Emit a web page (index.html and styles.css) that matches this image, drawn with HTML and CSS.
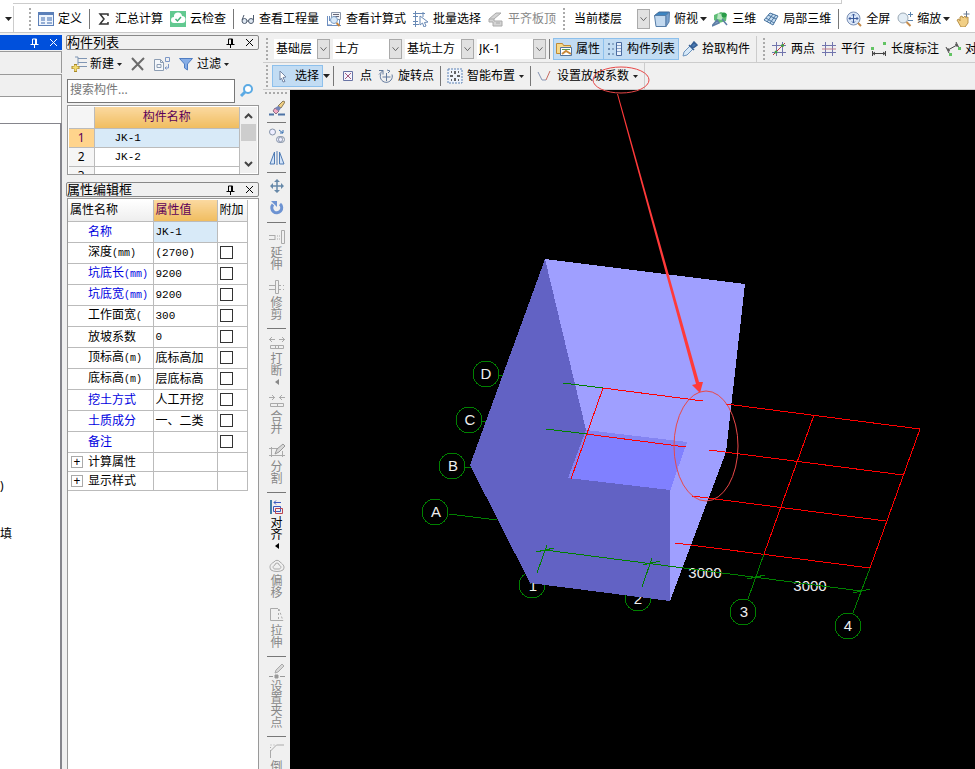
FILE: index.html
```html
<!DOCTYPE html>
<html lang="zh-CN">
<head>
    <meta charset="UTF-8">
    <meta name="viewport" content="width=device-width, initial-scale=1.0">
    <title>构件列表</title>
    <link rel="stylesheet" href="styles.css">
</head>
<body>

    <!-- Shared icons -->
    <svg class="sprite" aria-hidden="true">
        <symbol id="chevron" viewBox="0 0 13 20"><path d="M3 8l3.500 4L10 8" fill="none" stroke="#555"/></symbol>
        <symbol id="drop" viewBox="0 0 7 4"><path d="M0 0h7L3.500 4z" fill="#222"/></symbol>
        <symbol id="side" viewBox="0 0 4 6"><path d="M4 0v6L0 3z" fill="currentColor"/></symbol>
        <symbol id="pin" viewBox="0 0 9 10"><path d="M2.500 1h4v5M2.500 1v5M5.500 1v5M0.500 6.500h8M4.500 6.500V10" fill="none" stroke="currentColor"/></symbol>
        <symbol id="close" viewBox="0 0 9 9"><path d="M1 1l7 7M8 1L1 8" fill="none" stroke="currentColor"/></symbol>
    </svg>

    <!-- Main toolbar -->
    <header class="topbar">
        <div class="menu-edge"></div>
        <div class="tools">
            <button class="stub" aria-label="更多"><svg class="drop"><use href="#drop"/></svg></button>
            <i class="grip"></i>
            <button class="tool"><svg class="icon" viewBox="0 0 16 16"><rect x=".5" y="1.500" width="15" height="13" fill="#eef4fc" stroke="#5b7fb8"/><path d="M1 3h14" stroke="#5b7fb8" stroke-width="2"/><path d="M3 7h4M3 9h4M3 12h4M9 7h5M9 9h5M9 12h5" stroke="#3d68ad"/></svg>定义</button>
            <i class="sep"></i>
            <button class="tool"><svg class="icon narrow" viewBox="0 0 14 16"><path d="M11 5V3H3l4 5-4 5h8v-2" fill="none" stroke="#333" stroke-width="1.500"/></svg>汇总计算</button>
            <button class="tool"><svg class="icon" viewBox="0 0 16 16"><rect width="16" height="16" fill="#62c990"/><path d="M4 12a3 3 0 0 1 0-6 4 4 0 0 1 8-1 3.500 3.500 0 0 1 0 7z" fill="#fff"/><path d="M5.500 8l2 2 3.500-4" fill="none" stroke="#45b078" stroke-width="1.500"/></svg>云检查</button>
            <i class="sep"></i>
            <button class="tool"><svg class="icon narrow" viewBox="0 0 14 16"><circle cx="3.500" cy="10" r="2.500" fill="#dfe8f2" stroke="#4e5b6e"/><circle cx="10" cy="10" r="2.500" fill="#dfe8f2" stroke="#4e5b6e"/><path d="M1 9l2-5M12.500 9V4M6 10h1.500" stroke="#4e5b6e" fill="none"/></svg>查看工程量</button>
            <button class="tool"><svg class="icon" viewBox="0 0 16 16"><path d="M1.500 5v9H6M3.500 5v5M1 14.500h14M13.500 8v6" fill="none" stroke="#6d8fc0"/><path d="M5.500 1.500h9v7h-9z" fill="#f3f5f8" stroke="#8b97aa"/><path d="M7 3.500h6M7 5.500h6" stroke="#667"/><circle cx="8" cy="9" r="3.500" fill="#d7e8f8" stroke="#7d9fc7"/><path d="M10.500 12l3 3" stroke="#c6843c" stroke-width="2"/></svg>查看计算式</button>
            <button class="tool"><svg class="icon" viewBox="0 0 16 16"><path d="M0 2.500h12M0 5.500h5M0 13.500h6M2.500 0v16M10 1v5M0 10.500h5" stroke="#6889b5" fill="none"/><path d="M7 5l8 6-3.500.500L13 15l-2 1-1.500-4L7 14z" fill="#fff" stroke="#6889b5"/></svg>批量选择</button>
            <button class="tool" disabled><svg class="icon" viewBox="0 0 16 16"><path d="M1 8l7-6h5l-7 6zM6 8v2h8v5H5v-4H1V8M8 12h4" fill="#d4d4d4" stroke="#aaa"/></svg>平齐板顶</button>
            <i class="grip"></i>
            <span class="combo floor"><select aria-label="楼层"><option>当前楼层</option></select><svg class="chevron"><use href="#chevron"/></svg></span>
            <button class="tool"><svg class="icon" viewBox="0 0 16 16"><path d="M.500 4.500L5 1h10.500l-3.500 3.500z" fill="#3c85c2" stroke="#426b98"/><path d="M.500 4.500H12v11H2z" fill="#c3d9ef" stroke="#567da8"/><path d="M12 4.500L15.500 1 15 11l-3 4.500z" fill="#7ba3cf" stroke="#567da8"/></svg>俯视<svg class="drop"><use href="#drop"/></svg></button>
            <button class="tool"><svg class="icon" viewBox="0 0 16 16"><path d="M2 4l7-3 6 2-1 7-7 2-5-3z" fill="#5fbd76"/><path d="M6 2l5 2-1 5-5-1z" fill="#b9e6c1"/><circle cx="12" cy="4" r="2.500" fill="#2a9c49"/><path d="M0 15l5-6 2 3zM10 8l5 6" fill="#85a2c5" stroke="#5f7fa6" stroke-width="1.500"/></svg>三维</button>
            <button class="tool"><svg class="icon" viewBox="0 0 16 16"><path d="M1 9l6-7 8 3-5 9z" fill="#c5dcf1" stroke="#49749f"/><path d="M3 7l8 5M5 4l8 4M10 3l-6 8M13 4l-6 8" stroke="#49749f" fill="none"/></svg>局部三维</button>
            <i class="sep"></i>
            <button class="tool"><svg class="icon" viewBox="0 0 16 16"><circle cx="7.500" cy="7.500" r="6.500" fill="#dbe7f8" stroke="#7a8fb4"/><path d="M7.500 3v9M3 7.500h9M6 4.500L7.500 3 9 4.500M6 10.500L7.500 12 9 10.500M4.500 6L3 7.500 4.500 9M10.500 6L12 7.500 10.500 9" fill="none" stroke="#3c5b9b"/><path d="M12 12l3 3" stroke="#c58b4c" stroke-width="2"/></svg>全屏</button>
            <button class="tool"><svg class="icon" viewBox="0 0 16 16"><circle cx="6" cy="7" r="5" fill="#e3edf5" stroke="#9ba9b5"/><path d="M9.500 11l4 4" stroke="#c58b4c" stroke-width="2"/><path d="M13.500 1v5M11 3.500h5M11 9.500h5" stroke="#5b84ae"/></svg>缩放<svg class="drop"><use href="#drop"/></svg></button>
            <button class="tool"><svg class="icon" viewBox="0 0 16 16"><path d="M2 9l2-1 1 2V6l2-1 1 2 2-2 1 2 2-1v6l-3 4H6z" fill="#f1cf86" stroke="#b9924a"/><path d="M11.500 0v6M8.500 3h6" stroke="#667891"/></svg>平移</button>
        </div>
    </header>

    <main class="workspace">

        <!-- Left dock, mostly collapsed -->
        <aside class="dock-left">
            <div class="dock-title active">
                <button aria-label="固定"><svg class="pin"><use href="#pin"/></svg></button>
                <button aria-label="关闭"><svg class="close"><use href="#close"/></svg></button>
            </div>
            <div class="strip"></div>
            <div class="strip"></div>
            <div class="blank"></div>
            <div class="tree">
                <p>)</p>
                <p>填</p>
            </div>
        </aside>

        <aside class="dock-mid">
            <section class="panel">
                <div class="dock-title">
                    <h2>构件列表</h2>
                    <button aria-label="固定"><svg class="pin"><use href="#pin"/></svg></button>
                    <button aria-label="关闭"><svg class="close"><use href="#close"/></svg></button>
                </div>
                <div class="panel-tools">
                    <button class="tool"><svg class="icon" viewBox="0 0 16 16"><path d="M7 2.500h9M7 6.500h9M7 10.500h9M4 1h3v8" fill="none" stroke="#7f95b3"/><path d="M4.500 8v8M.500 11.500h8" stroke="#a8892a" stroke-width="3"/><path d="M4.500 9v6M1.500 11.500h6" stroke="#f3dc72" stroke-width="2"/></svg>新建<svg class="drop small"><use href="#drop"/></svg></button>
                    <button class="tool" aria-label="删除"><svg class="icon" viewBox="0 0 16 16"><path d="M2 2l11 12M14 2L2 14" stroke="#6b6b6b" stroke-width="2" fill="none"/></svg></button>
                    <button class="tool" aria-label="复制"><svg class="icon" viewBox="0 0 16 16"><path d="M.500 3.500h6l3 3v8h-9zM6.500 3.500v3h3M3 8.500h4v3H3z" fill="#f4f7fb" stroke="#8c9db3"/><path d="M11.500 1.500h4v4h-4zM14.500 8v4H11M12.500 10.500L11 12l1.500 1.500" fill="none" stroke="#7c97c6"/></svg></button>
                    <button class="tool"><svg class="icon" viewBox="0 0 16 16"><path d="M1.500 2.500h13L9.500 8v6l-3-2V8z" fill="#87aee6" stroke="#4f7dc2"/></svg>过滤<svg class="drop small"><use href="#drop"/></svg></button>
                </div>
                <div class="search">
                    <input type="text" placeholder="搜索构件..." aria-label="搜索构件">
                    <button aria-label="搜索"><svg class="icon" viewBox="0 0 16 16"><circle cx="9" cy="6" r="4" fill="#fff" stroke="#5baae4" stroke-width="2"/><path d="M6 9l-4 4" stroke="#5baae4" stroke-width="3"/></svg></button>
                </div>
                <div class="list">
                    <table class="grid components">
                        <tr><th class="no"></th><th class="hot">构件名称</th></tr>
                        <tr class="selected"><td class="no">1</td><td class="mono">JK-1</td></tr>
                        <tr><td class="no">2</td><td class="mono">JK-2</td></tr>
                        <tr><td class="no">3</td><td></td></tr>
                    </table>
                    <div class="scrollbar">
                        <svg class="arrow" viewBox="0 0 9 6"><path d="M1 5l3.500-3.500L8 5" fill="none" stroke="#444" stroke-width="2"/></svg>
                        <i class="thumb"></i>
                        <svg class="arrow" viewBox="0 0 9 6"><path d="M1 1l3.500 3.500L8 1" fill="none" stroke="#444" stroke-width="2"/></svg>
                    </div>
                </div>
            </section>

            <section class="panel grow">
                <div class="dock-title">
                    <h2>属性编辑框</h2>
                    <button aria-label="固定"><svg class="pin"><use href="#pin"/></svg></button>
                    <button aria-label="关闭"><svg class="close"><use href="#close"/></svg></button>
                </div>
                <div class="props-wrap">
                    <table class="grid props">
                        <tr><th>属性名称</th><th class="hot">属性值</th><th>附加</th></tr>
                        <tr><td class="blue">名称</td><td class="current"><span class="mono">JK-1</span></td><td></td></tr>
                        <tr><td>深度<span class="unit">(mm)</span></td><td><span class="mono">(2700)</span></td><td><input type="checkbox" aria-label="深度"></td></tr>
                        <tr><td class="blue">坑底长<span class="unit">(mm)</span></td><td><span class="mono">9200</span></td><td><input type="checkbox" aria-label="坑底长"></td></tr>
                        <tr><td class="blue">坑底宽<span class="unit">(mm)</span></td><td><span class="mono">9200</span></td><td><input type="checkbox" aria-label="坑底宽"></td></tr>
                        <tr><td>工作面宽<span class="unit">(</span></td><td><span class="mono">300</span></td><td><input type="checkbox" aria-label="工作面宽"></td></tr>
                        <tr><td>放坡系数</td><td><span class="mono">0</span></td><td><input type="checkbox" aria-label="放坡系数"></td></tr>
                        <tr><td>顶标高<span class="unit">(m)</span></td><td>底标高加</td><td><input type="checkbox" aria-label="顶标高"></td></tr>
                        <tr><td>底标高<span class="unit">(m)</span></td><td>层底标高</td><td><input type="checkbox" aria-label="底标高"></td></tr>
                        <tr><td class="blue">挖土方式</td><td>人工开挖</td><td><input type="checkbox" aria-label="挖土方式"></td></tr>
                        <tr><td class="blue">土质成分</td><td>一、二类</td><td><input type="checkbox" aria-label="土质成分"></td></tr>
                        <tr><td class="blue">备注</td><td></td><td><input type="checkbox" aria-label="备注"></td></tr>
                        <tr class="group"><td><button class="expand">+</button>计算属性</td><td></td><td></td></tr>
                        <tr class="group"><td><button class="expand">+</button>显示样式</td><td></td><td></td></tr>
                    </table>
                </div>
            </section>
        </aside>

        <div class="editor">
            <div class="bar">
                <i class="grip"></i>
                <span class="combo w-s"><select aria-label="楼层选择"><option>基础层</option></select><svg class="chevron"><use href="#chevron"/></svg></span>
                <span class="combo w-m"><select aria-label="构件大类"><option>土方</option></select><svg class="chevron"><use href="#chevron"/></svg></span>
                <span class="combo w-m"><select aria-label="构件类型"><option>基坑土方</option></select><svg class="chevron"><use href="#chevron"/></svg></span>
                <span class="combo w-m"><select aria-label="构件"><option>JK-1</option></select><svg class="chevron"><use href="#chevron"/></svg></span>
                <i class="sep"></i>
                <div class="toggles">
                    <button class="tool on"><svg class="icon" viewBox="0 0 16 16"><path d="M.500 2.500h6l1 2h7v8H.500z" fill="#f6d98b" stroke="#c08a34"/><path d="M4.500 6.500h11v8h-11z" fill="#fff" stroke="#52749f"/><path d="M6 13l4-3 5 3" stroke="#c8873a" fill="none" stroke-width="2"/><path d="M6 8.500h8" stroke="#5a9a50"/></svg>属性</button>
                    <button class="tool on"><svg class="icon" viewBox="0 0 16 16"><path d="M1.500 2.500h1v1h-1zM1.500 7.500h1v1h-1zM1.500 12.500h1v1h-1z" fill="none" stroke="#56779e"/><path d="M5 3h2M5 8h2M5 13h2" stroke="#56779e"/><path d="M9.500 1.500h5v13h-5z" fill="#e8f0fb" stroke="#4a6ba0"/><path d="M10 4.500h4M10 7.500h4M10 10.500h4" stroke="#8aa3c8"/></svg>构件列表</button>
                </div>
                <button class="tool pick"><svg class="icon" viewBox="0 0 16 16"><path d="M1 15l1-4 6-6 3 3-6 6z" fill="#d6e8f8" stroke="#6c93bd"/><path d="M7 4l5 5M9 5l3-4 3 3-4 3z" fill="#4a7ab4" stroke="#365f94" stroke-width="1.500"/></svg>拾取构件</button>
                <i class="edge"></i>
                <i class="grip"></i>
                <button class="tool"><svg class="icon" viewBox="0 0 16 16"><path d="M5.500 1v14M11.500 1v14M1 4.500h14M1 11.500h14" stroke="#7174ad"/><path d="M2 14L14 2" stroke="#c03a3a"/><circle cx="5" cy="11" r="1.500" fill="#3fa045"/><circle cx="11.500" cy="4.500" r="1.500" fill="#3fa045"/></svg>两点</button>
                <button class="tool"><svg class="icon" viewBox="0 0 16 16"><path d="M4.500 1v14M11.500 1v14" stroke="#7174ad"/><path d="M1 4.500h14M1 11.500h14" stroke="#7174ad"/><path d="M1 8h14" stroke="#c07a8a"/></svg>平行</button>
                <button class="tool"><svg class="icon" viewBox="0 0 16 16"><path d="M1.500 10v5M14.500 10v5M2 12.500h12M4 11l-2 1.500L4 14M12 11l2 1.500-2 1.500" fill="none" stroke="#444"/><path d="M0 6h3v3H0zM12 1h3v3h-3z" fill="#62c463"/></svg>长度标注</button>
                <button class="tool"><svg class="icon" viewBox="0 0 16 16"><path d="M1 6l3 6M11 1l3 6M3 9l9-5M3 7v2l2 1M10 3l2 1v2" fill="none" stroke="#444"/><path d="M4 12h3v3H4zM13 6h3v3h-3z" fill="#62c463"/></svg>对齐标注</button>
            </div>
            <div class="bar">
                <i class="grip"></i>
                <div class="toggles">
                    <button class="tool on"><svg class="icon" viewBox="0 0 16 16"><path d="M5 3l6 6-3 .500 2 4-2 .500-1.500-4L5 12z" fill="#fff" stroke="#7486a5"/></svg>选择</button>
                    <svg class="drop"><use href="#drop"/></svg>
                </div>
                <i class="sep"></i>
                <button class="tool"><svg class="icon" viewBox="0 0 16 16"><path d="M3.500 3.500h9v9h-9z" fill="#f4f4fc" stroke="#6873a4"/><path d="M5 5l6 6M11 5l-6 6" stroke="#a35a80"/></svg>点</button>
                <button class="tool"><svg class="icon" viewBox="0 0 16 16"><path d="M3 5.500a6 6 0 1 0 11 1M8.500 5v8M4.500 9h8" fill="none" stroke="#62799c"/><path d="M1 2.500h4v4M5 2.500L1 6.500M9 2l3 1-2 2" fill="none" stroke="#62799c"/></svg>旋转点</button>
                <i class="sep"></i>
                <button class="tool"><svg class="icon" viewBox="0 0 16 16"><path d="M1 1h14v14H1z" fill="#edf3fc" stroke="#5e83b5" stroke-dasharray="2 1"/><path d="M8 3v3M8 10v3M3 8h3M10 8h3M4 4h1M11 4h1M4 12h1M11 12h1" stroke="#333" stroke-width="1.500"/></svg>智能布置<svg class="drop small"><use href="#drop"/></svg></button>
                <i class="sep"></i>
                <button class="tool"><svg class="icon" viewBox="0 0 16 16"><path d="M1 4l4 8h4" fill="none" stroke="#8795b3"/><path d="M9 12l4-9" stroke="#c66a5f"/></svg>设置放坡系数<svg class="drop small"><use href="#drop"/></svg></button>
                <i class="edge"></i>
            </div>

            <div class="stage">
                <nav class="side">
                    <i class="grip-h"></i>
                    <button class="vtool" aria-label="删除"><svg class="icon" viewBox="0 0 16 16"><path d="M9 6l5-5 2 1-4 6z" fill="#f0cf82" stroke="#8a7a55"/><path d="M6 8l4 3-3 3-3-3z" fill="#f3a9c3" stroke="#8a6f86"/><path d="M9 6l3 2-2 3-4-3z" fill="#7585b8"/><path d="M0 14.500h5M9 14.500h7" stroke="#4d73a5" stroke-width="2"/></svg></button>
                    <i class="sep-h"></i>
                    <button class="vtool" aria-label="复制"><svg class="icon" viewBox="0 0 16 16"><circle cx="3.500" cy="4" r="3" fill="#eef" stroke="#8593a8"/><circle cx="10.500" cy="11.500" r="3" fill="#eef" stroke="#8593a8"/><circle cx="12.500" cy="11.500" r="3" fill="none" stroke="#8593a8"/><path d="M10 2l4 3M14 2v3h-3" fill="none" stroke="#3971b2"/></svg></button>
                    <button class="vtool" aria-label="镜像"><svg class="icon" viewBox="0 0 16 16"><path d="M5.500 2v12H1zM10.500 2v12H15z" fill="#d4e4f8" stroke="#4f7bb4"/><path d="M8 1v14" stroke="#4f7bb4"/></svg></button>
                    <i class="sep-h"></i>
                    <button class="vtool" aria-label="移动"><svg class="icon" viewBox="0 0 16 16"><path d="M8 3v10M3 8h10" stroke="#6688a8" stroke-width="1.500"/><path d="M8 1l3 3H5zM8 15l3-3H5zM1 8l3-3v6zM15 8l-3-3v6z" fill="#6688a8"/></svg></button>
                    <button class="vtool" aria-label="旋转"><svg class="icon" viewBox="0 0 16 16"><path d="M4 4.500a5 5 0 1 0 7-.500" fill="none" stroke="#6d93d2" stroke-width="3"/><path d="M2 1h6v6z" fill="#6d93d2"/></svg></button>
                    <i class="sep-h"></i>
                    <button class="vtool labelled" disabled><svg class="icon" viewBox="0 0 16 16"><path d="M0 6.500h6M0 10.500h6M6 6v5M12.500 1.500h3v13h-3zM8 7h1M8 10h1M10 7h1M10 10h1" fill="none" stroke="#aaa"/></svg><span>延伸</span></button>
                    <button class="vtool labelled" disabled><svg class="icon" viewBox="0 0 16 16"><path d="M0 6.500h6M0 10.500h6M6.500 1.500h3v13h-3zM10 6.500h2M10 10.500h2M14 6.500h1M14 10.500h1" fill="none" stroke="#aaa"/></svg><span>修剪</span></button>
                    <i class="sep-h"></i>
                    <button class="vtool labelled" disabled><svg class="icon" viewBox="0 0 16 16"><path d="M0 4.500h6M3 2L.500 4.500 3 7M10 4.500h6M13 2l2.500 2.500L13 7M1.500 10.500h13v3h-13zM6.500 10v4M9.500 10v4" fill="none" stroke="#aaa"/></svg><span>打断</span><svg class="side-arrow"><use href="#side"/></svg></button>
                    <button class="vtool labelled" disabled><svg class="icon" viewBox="0 0 16 16"><path d="M0 4.500h6M3 2l2.500 2.500L3 7M10 4.500h6M13 2l-2.500 2.500L13 7M1.500 10.500h13v3h-13zM8.500 10v4" fill="none" stroke="#aaa"/></svg><span>合并</span></button>
                    <button class="vtool labelled" disabled><svg class="icon" viewBox="0 0 16 16"><path d="M0 5.500h9M2.500 4v10M0 12.500h16M13.500 8v6" fill="none" stroke="#aaa"/><path d="M6 11l2-5 6-5 2 2-6 6z" fill="#d8d8d8" stroke="#999"/></svg><span>分割</span></button>
                    <i class="sep-h"></i>
                    <button class="vtool labelled"><svg class="icon" viewBox="0 0 16 16"><path d="M2 1v14" stroke="#427da6" stroke-width="2"/><path d="M5 3.500h7M7 1.500l-2 2 2 2M4.500 7.500h7v5h-7z" fill="none" stroke="#3a5ac0"/><path d="M6.500 9.500h7v5h-7z" fill="none" stroke="#b84450"/></svg><span>对齐</span><svg class="side-arrow"><use href="#side"/></svg></button>
                    <button class="vtool labelled" disabled><svg class="icon" viewBox="0 0 16 16"><path d="M5 5a3.500 3.500 0 0 1 6 0c4 3 5 5 3 8-3 2-9 2-12 0-2-3-1-6 3-8z" fill="none" stroke="#aaa"/><path d="M6 8a2 2 0 0 1 4 0c3 1 2 4 0 4H6c-2 0-3-3 0-4z" fill="none" stroke="#aaa"/></svg><span>偏移</span></button>
                    <button class="vtool labelled" disabled><svg class="icon" viewBox="0 0 16 16"><path d="M9 1.500H1.500v12H14" fill="none" stroke="#aaa"/><path d="M9.500 2v12M10 2l4 12" stroke="#aaa" stroke-dasharray="2 2"/></svg><span>拉伸</span></button>
                    <i class="sep-h"></i>
                    <button class="vtool labelled" disabled><svg class="icon" viewBox="0 0 16 16"><path d="M6 10l1-3 6-6 2 2-6 6z" fill="#d8d8d8" stroke="#aaa"/><path d="M0 13.500h4M11 13.500h5M6 12h3v3H6z" fill="#999" stroke="#999"/></svg><span>设置夹点</span></button>
                    <i class="sep-h"></i>
                    <button class="vtool labelled" disabled><svg class="icon" viewBox="0 0 16 16"><path d="M1.500 15V8l6-6H15" fill="none" stroke="#aaa"/><path d="M1.500 8V2h6" fill="none" stroke="#aaa" stroke-dasharray="1 2"/></svg><span>倒角</span></button>
                </nav>

                <!-- 3D view: pit solid, axis grid, dimensions and markup -->
                <div class="view">
                    <svg class="scene">
                        <g transform="translate(-290 -90)">
                            <g class="axis">
                                <circle cx="486" cy="374" r="13"/>
                                <circle cx="469" cy="420" r="13"/>
                                <circle cx="452" cy="466" r="13"/>
                                <circle cx="435" cy="512" r="13"/>
                                <circle cx="532" cy="585" r="13"/>
                                <circle cx="638" cy="598" r="13"/>
                                <circle cx="743" cy="612" r="13"/>
                                <circle cx="848" cy="626" r="13"/>
                                <path d="M449 514l48 6M499 375l5 1M482 421l5 1M465 467l6 1"/>
                            </g>
                            <g class="label">
                                <text x="486" y="379">D</text>
                                <text x="470" y="425">C</text>
                                <text x="453" y="471">B</text>
                                <text x="436" y="517">A</text>
                                <text x="533" y="591">1</text>
                                <text x="638" y="604">2</text>
                                <text x="744" y="617">3</text>
                                <text x="848" y="631">4</text>
                            </g>
                            <g class="solid">
                                <polygon fill="#9f9fff" points="545,259 745,284 726,452 670,601 670,490 687,442 586,430"/>
                                <polygon fill="#8080ff" points="586,430 687,442 670,491 568,478"/>
                                <polygon fill="#8484f2" points="586,430 687,442 686,446 588,434 572,478 568,478"/>
                                <polygon fill="#6262c4" points="545,259 470,465 530,583 670,601 670,490 568,478 586,430"/>
                            </g>
                            <path class="grid-line" d="M603 388l100 13M726 404l194 25M586 434l100 13M709 450l194 25M692 496l194 25M675 543l195 25M603 388l-32 91M814 415l-50 139M920 429l-50 139"/>
                            <g class="label">
                                <text x="705" y="578">3000</text>
                                <text x="810" y="591">3000</text>
                            </g>
                            <path class="axis" d="M563 383l40 5M546 429l41 5M545 550l316 41M547 545l-10 28M652 558l-10 29M764 554l-16 45M870 568l-17 45M536 552l18-4M643 565l17-4M747 579l18-4M853 593l17-4"/>
                            <ellipse class="mark" cx="706" cy="446" rx="32" ry="55"/>
                            <ellipse class="mark" cx="621" cy="80" rx="28" ry="13"/>
                            <polygon fill="#ff3a3a" points="617,94 618,94 699,382 703,382 700,393 692,385 696,384"/>
                        </g>
                    </svg>
                </div>
            </div>
        </div>
    </main>

</body>
</html>
```
FILE: styles.css
```css
* {
    margin: 0;
    padding: 0;
    box-sizing: border-box;
}

body {
    display: flex;
    flex-direction: column;
    height: 100vh;
    overflow: hidden;
    background: #f0f0f0;
    color: #000;
    font-family: "Noto Sans", "Noto Sans CJK SC", sans-serif;
    font-size: 12px;
    line-height: 16px;
}

button,
select,
input {
    font: inherit;
    color: inherit;
    border: none;
    background: none;
}

svg {
    display: block;
    flex: none;
}

.sprite {
    position: absolute;
    width: 0;
    height: 0;
}

/* Small shared pieces */
.icon {
    width: 16px;
    height: 16px;
}

.icon.narrow {
    width: 14px;
}

.drop {
    width: 7px;
    height: 4px;
}

.drop.small {
    width: 5px;
    height: 3px;
}

.pin {
    width: 9px;
    height: 10px;
}

.close {
    width: 9px;
    height: 9px;
}

.grip {
    flex: none;
    width: 2px;
    height: 22px;
    background: repeating-linear-gradient(#aaa 0 2px, transparent 2px 4px);
}

.sep {
    flex: none;
    width: 1px;
    height: 20px;
    background: #777;
}

.edge {
    flex: none;
    align-self: stretch;
    width: 1px;
    background: #ccc;
}

.tool {
    display: flex;
    flex: none;
    align-items: center;
    gap: 4px;
    white-space: nowrap;
}

.tool:disabled,
.vtool:disabled {
    color: #888;
}

/* Top toolbar */
.topbar {
    flex: none;
    background: #fff;
    border-bottom: 1px solid #c8c8c8;
}

.menu-edge {
    width: 85%;
    height: 4px;
    margin-left: 13px;
    border-bottom: 1px solid #ccc;
    border-right: 1px solid #ccc;
}

.tools {
    display: flex;
    align-items: center;
    gap: 7px;
    height: 28px;
    padding-top: 2px;
    overflow: hidden;
}

.tools .tool .drop {
    margin: 0 -2px;
}

.stub {
    flex: none;
    align-self: stretch;
    width: 14px;
    margin-right: 8px;
    padding-left: 5px;
    border-right: 1px solid #ccc;
}

/* Drop-downs */
.combo {
    position: relative;
    flex: none;
    height: 20px;
    background: #fff;
}

.combo select {
    width: 100%;
    height: 20px;
    padding-left: 2px;
    appearance: none;
}

.chevron {
    position: absolute;
    top: 0;
    right: 0;
    width: 13px;
    height: 20px;
    background: #e1e1e1;
    border: 1px solid #aaa;
    pointer-events: none;
}

.floor {
    width: 78px;
    margin-right: -3px;
}

.w-s {
    width: 56px;
}

.w-m {
    width: 69px;
}

/* Workspace */
.workspace {
    display: flex;
    flex: 1;
    gap: 4px;
    min-height: 0;
    padding-top: 2px;
}

.dock-title {
    display: flex;
    align-items: center;
    gap: 10px;
    height: 15px;
    padding-right: 4px;
    border: 1px solid #888;
    border-radius: 2px;
}

.dock-title h2 {
    flex: 1;
    font-size: 13px;
    font-weight: normal;
    line-height: 13px;
}

.dock-title.active {
    justify-content: flex-end;
    background: #0050dc;
    border: none;
    border-radius: 0;
    color: #fff;
}

.dock-left {
    display: flex;
    flex-direction: column;
    flex: none;
    width: 62px;
}

.strip {
    height: 22px;
    margin-top: 1px;
    border: solid #999;
    border-width: 1px 1px 0 0;
}

.blank {
    height: 27px;
    background: #fff;
    border: solid #999;
    border-width: 1px 1px 0 0;
}

.tree {
    flex: 1;
    padding-top: 354px;
    background: #fff;
    border: solid #85858c;
    border-width: 1px 2px 0 0;
}

.tree p {
    margin-bottom: 32px;
}

/* Component and property docks */
.dock-mid {
    display: flex;
    flex-direction: column;
    flex: none;
    gap: 7px;
    width: 193px;
}

.panel.grow {
    display: flex;
    flex-direction: column;
    flex: 1;
    min-height: 0;
}

.panel-tools {
    display: flex;
    align-items: center;
    gap: 8px;
    height: 28px;
    padding-left: 5px;
}

.panel-tools .tool {
    gap: 3px;
}

.search {
    display: flex;
    align-items: center;
    gap: 2px;
    height: 26px;
    padding: 0 2px 0 1px;
}

.search input {
    flex: 1;
    min-width: 0;
    height: 24px;
    padding: 0 2px 4px;
    background: #fff;
    border: 1px solid #777;
}

.search input::placeholder {
    color: #777;
}

.search button {
    padding: 2px;
}

.list {
    display: flex;
    height: 70px;
    margin: 1px 0 0 1px;
    padding: 1px;
    overflow: hidden;
    background: #fff;
    border: 1px solid #999;
}

.grid {
    border-collapse: collapse;
    table-layout: fixed;
}

.grid th,
.grid td {
    overflow: hidden;
    border: solid #bbb;
    border-width: 0 1px 1px 0;
    font-weight: normal;
    text-align: left;
    white-space: nowrap;
}

.grid th {
    height: 21px;
    background: linear-gradient(#fff, #eee);
}

.grid th.hot {
    background: linear-gradient(#fbd9a0, #f0bd60);
    color: #5c0058;
}

.components {
    flex: 1;
    align-self: flex-start;
}

.components th.hot {
    text-align: center;
}

.components td {
    height: 19px;
    padding-left: 20px;
    line-height: 14px;
}

.components .no {
    width: 25px;
    padding: 0;
    background: #f5f5f5;
    text-align: center;
}

.components .selected td {
    background: #d8eaf8;
}

.components .selected .no {
    background: #ffd48c;
    color: #5c0058;
}

.mono {
    font-family: "Liberation Mono", monospace;
    font-size: 11px;
}

.unit {
    font-family: "Liberation Mono", monospace;
    font-size: 10px;
}

.scrollbar {
    display: flex;
    flex-direction: column;
    align-items: center;
    width: 17px;
    padding: 6px 0;
    background: #f0f0f0;
}

.arrow {
    width: 9px;
    height: 6px;
}

.thumb {
    width: 15px;
    height: 17px;
    margin: 5px 0 auto;
    background: #cdcdcd;
}

.props-wrap {
    flex: 1;
    margin: 1px 0 0 1px;
    padding: 1px 0;
    background: #fff;
    border: 1px solid #999;
    border-bottom: none;
}

.props {
    width: 180px;
}

.props th,
.props td {
    height: 21px;
    padding-left: 2px;
    line-height: 16px;
}

.props th:nth-child(1) {
    width: 85px;
}

.props th:nth-child(2) {
    width: 64px;
}

.props td:first-child {
    padding-left: 20px;
}

.props .blue {
    color: #0000e0;
}

.props .current {
    background: #d8eaf8;
}

.props .group td {
    height: 19px;
}

.props .group td:first-child {
    padding-left: 3px;
}

.expand {
    width: 12px;
    height: 12px;
    margin-right: 5px;
    border: 1px solid #aaa;
    line-height: 10px;
}

.props input {
    display: block;
    width: 13px;
    height: 13px;
    appearance: none;
    border: 1px solid #333;
}

/* Editor */
.editor {
    display: flex;
    flex-direction: column;
    flex: 1;
    min-width: 0;
    padding-top: 1px;
}

.bar {
    display: flex;
    flex: none;
    align-items: center;
    gap: 6px;
    height: 27px;
    padding-left: 3px;
    overflow: hidden;
    border-bottom: 1px solid #ccc;
}

.bar .combo + .combo {
    margin-left: -3px;
}

.bar .combo + .sep,
.bar .toggles + .sep {
    margin-left: -3px;
}

.bar .sep + .toggles {
    margin-left: -3px;
}

.toggles {
    display: flex;
    align-items: center;
    margin-left: -2px;
}

.pick {
    margin-left: -3px;
}

.on {
    height: 22px;
    padding: 0 3px 0 2px;
    background: #c2dcf3;
    border: 1px solid #8dc0ec;
}

.on + .on {
    padding-left: 3px;
    border-left: none;
}

.stage {
    display: flex;
    flex: 1;
    min-height: 0;
}

.side {
    display: flex;
    flex-direction: column;
    flex: none;
    align-items: center;
    gap: 6px;
    width: 27px;
    padding-top: 2px;
    overflow: hidden;
}

.side > * {
    flex: none;
}

.grip-h {
    width: 23px;
    height: 2px;
    background: repeating-linear-gradient(90deg, #aaa 0 2px, transparent 2px 4px);
}

.sep-h {
    width: 19px;
    height: 1px;
    margin-bottom: -1px;
    background: #777;
}

.vtool {
    display: flex;
    flex-direction: column;
    align-items: center;
    gap: 2px;
}

.vtool.labelled {
    padding: 1px 0;
}

.vtool span {
    width: 12px;
    line-height: 12px;
    word-break: break-all;
}

.side-arrow {
    width: 4px;
    height: 6px;
}

/* 3D view */
.view {
    flex: 1;
    min-width: 0;
    background: #000;
}

.scene {
    width: 100%;
    height: 100%;
    overflow: visible;
}

.solid,
.axis,
.grid-line {
    shape-rendering: crispEdges;
}

.axis {
    fill: none;
    stroke: #008000;
}

.label {
    fill: #eee;
    font-family: "Liberation Sans", sans-serif;
    font-size: 15px;
    text-anchor: middle;
}

.grid-line {
    fill: none;
    stroke: #f00;
}

.mark {
    fill: none;
    stroke: #e84848;
}
```
